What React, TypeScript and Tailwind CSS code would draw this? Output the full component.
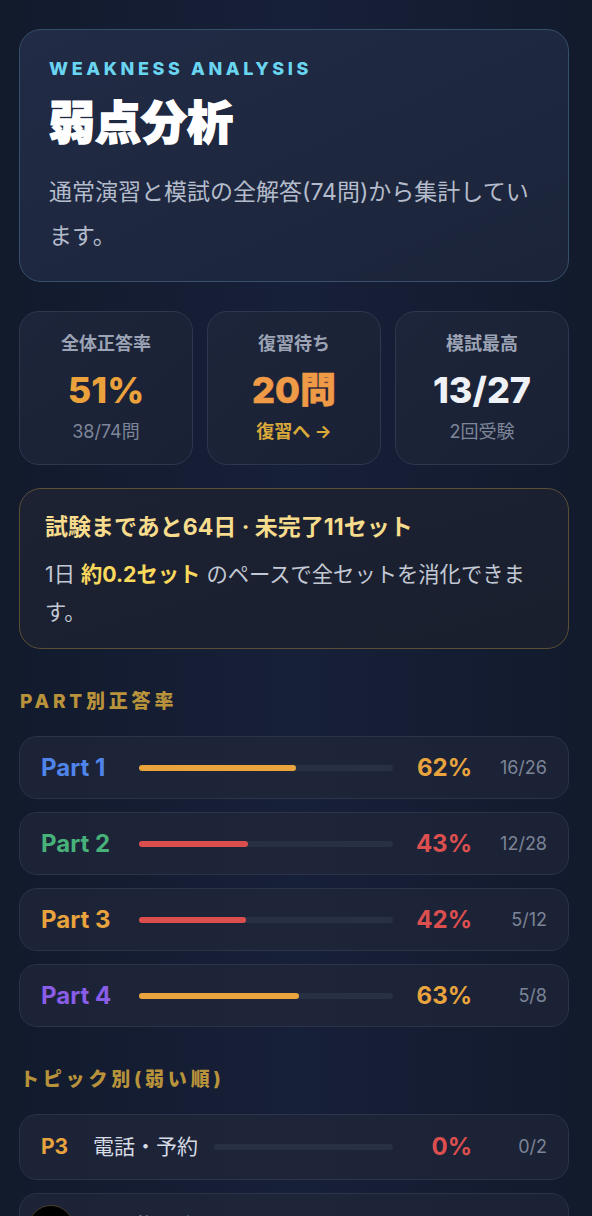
const font = "font-['Inter','Noto_Sans_CJK_JP',sans-serif]";

interface PartRow {
  label: string;
  color: string;
  pct: number;
  count: string;
}

const parts: PartRow[] = [
  { label: "Part 1", color: "text-[#4f85ea]", pct: 62, count: "16/26" },
  { label: "Part 2", color: "text-[#48b27b]", pct: 43, count: "12/28" },
  { label: "Part 3", color: "text-[#e9a33d]", pct: 42, count: "5/12" },
  { label: "Part 4", color: "text-[#8a5de8]", pct: 63, count: "5/8" },
];

const topics = [
  { part: "P3", name: "電話・予約", pct: 0, count: "0/2" },
  { part: "P2", name: "買い物・店", pct: 0, count: "0/1" },
];

// 50%未満は赤、それ以外はアンバー
const tone = (pct: number) => (pct < 50 ? "text-[#dd4f4f]" : "text-[#e9a43e]");
const fill = (pct: number) => (pct < 50 ? "bg-[#dc4e4e]" : "bg-[#e9a43e]");

const Bar = ({ pct }: { pct: number }) => (
  <div className="h-[6px] flex-1 rounded-full bg-[#283044]">
    <div className={`h-full rounded-full ${fill(pct)}`} style={{ width: `${pct}%` }} />
  </div>
);

const StatCard = ({ label, children }: { label: string; children: React.ReactNode }) => (
  <div className="flex flex-col items-center rounded-[20px] border border-[#2d3750] bg-gradient-to-br from-[#1d253a] to-[#1a2135] pb-[20px] pt-[20px]">
    <div className="text-[18px] font-bold leading-[24px] text-[#9ba3b4]">{label}</div>
    {children}
  </div>
);

export default function App() {
  return (
    <div className={`relative min-h-[1216px] bg-gradient-to-r from-[#121a2c] via-[#172039] to-[#121a2c] pb-[40px] pl-[19px] pr-[23px] pt-[29px] ${font}`}>
      {/* ヘッダー */}
      <div className="rounded-[22px] border border-[#35506a] bg-gradient-to-br from-[#212b45] to-[#1b2439] px-[29px] pb-[23px] pt-[27px]">
        <div className="text-[18px] font-extrabold uppercase leading-[24px] tracking-[0.2em] text-[#6ad5f1]">
          Weakness Analysis
        </div>
        <h1 className="mt-[14px] text-[46px] font-black leading-[55px] text-white [-webkit-text-stroke:1.5px_white]">弱点分析</h1>
        <p className="mt-[20px] text-[23px] leading-[44px] text-[#b4bccb]">
          通常演習と模試の全解答(74問)から集計しています。
        </p>
      </div>

      {/* サマリー */}
      <div className="mt-[29px] grid grid-cols-3 gap-[14px]">
        <StatCard label="全体正答率">
          <div className="mt-[12px] text-[36px] font-extrabold leading-[44px] text-[#eca23c]">51%</div>
          <div className="mt-[8px] text-[18px] leading-[24px] text-[#7e8699]">38/74問</div>
        </StatCard>
        <StatCard label="復習待ち">
          <div className="mt-[12px] text-[36px] font-extrabold leading-[44px] text-[#ef9a46] [-webkit-text-stroke:0.6px_#ef9a46]">20問</div>
          <div className="mt-[8px] text-[18px] font-bold leading-[24px] text-[#d9aa3a]">復習へ →</div>
        </StatCard>
        <StatCard label="模試最高">
          <div className="mt-[12px] text-[36px] font-extrabold leading-[44px] text-[#eef1f6]">13/27</div>
          <div className="mt-[8px] text-[18px] leading-[24px] text-[#7e8699]">2回受験</div>
        </StatCard>
      </div>

      {/* ペース */}
      <div className="mt-[23px] rounded-[22px] border border-[#5b4f36] bg-gradient-to-br from-[#1d2233] to-[#1a1f2e] px-[25px] pb-[17px] pt-[22px]">
        <div className="text-[23px] font-bold leading-[32px] text-[#f6dc8c]">
          試験まであと64日 · 未完了11セット
        </div>
        <p className="mt-[12px] text-[21.3px] leading-[38px] text-[#c3c9d4]">
          1日 <span className="font-bold text-[#f9d95c]">約0.2セット</span> のペースで全セットを消化できます。
        </p>
      </div>

      {/* PART別 */}
      <h2 className="mt-[41px] pl-px text-[19px] font-extrabold leading-[24px] tracking-[0.2em] text-[#b8933b]">PART別正答率</h2>
      <div className="mt-[22px] flex flex-col gap-[13px]">
        {parts.map((p) => (
          <div key={p.label} className="flex items-center gap-[16px] rounded-[18px] border border-[#2b3349] bg-gradient-to-r from-[#1c2337] via-[#1e2539] to-[#1b2235] px-[21px] py-[16px]">
            <div className={`w-[82px] text-[24px] font-bold leading-[29px] ${p.color}`}>{p.label}</div>
            <Bar pct={p.pct} />
            <div className={`w-[63px] text-right text-[24px] font-bold leading-[29px] ${tone(p.pct)}`}>{p.pct}%</div>
            <div className="w-[59px] text-right text-[18px] leading-[29px] text-[#7c8497]">{p.count}</div>
          </div>
        ))}
      </div>

      {/* トピック別 */}
      <h2 className="mt-[41px] pl-px text-[19px] font-extrabold leading-[24px] tracking-[0.2em] text-[#b8933b]">トピック別(弱い順)</h2>
      <div className="mt-[22px] flex flex-col gap-[13px]">
        {topics.map((t) => (
          <div key={t.name} className="flex items-center gap-[16px] rounded-[18px] border border-[#2b3349] bg-gradient-to-r from-[#1c2337] via-[#1e2539] to-[#1b2235] px-[21px] py-[16px]">
            <div className="w-[36px] text-[21px] font-bold leading-[32px] text-[#e9a33d]">{t.part}</div>
            <div className="text-[21px] leading-[32px] text-[#d6dbe4]">{t.name}</div>
            <Bar pct={t.pct} />
            <div className={`w-[63px] text-right text-[24px] font-bold leading-[32px] ${tone(t.pct)}`}>{t.pct}%</div>
            <div className="w-[59px] text-right text-[18px] leading-[32px] text-[#7c8497]">{t.count}</div>
          </div>
        ))}
      </div>

      {/* 浮動ボタン */}
      <div className="absolute left-[28px] top-[1205px] h-[46px] w-[46px] rounded-full border border-[#4a3f2a] bg-black" />
    </div>
  );
}
